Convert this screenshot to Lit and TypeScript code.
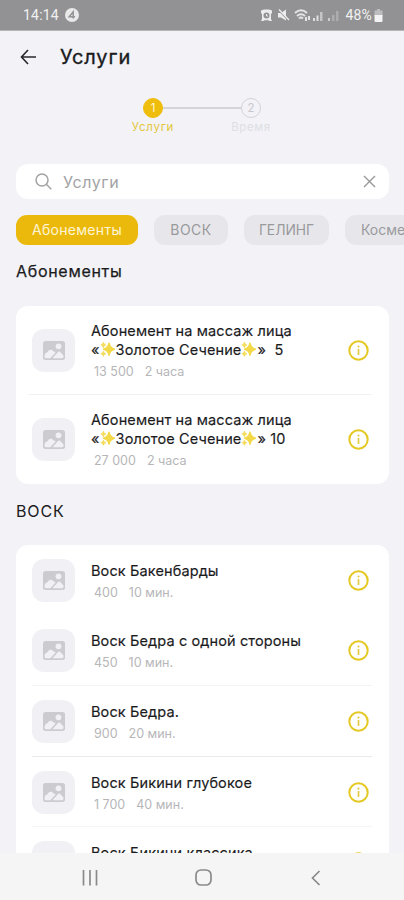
import { LitElement, html, css, nothing } from "lit";
import { customElement, property } from "lit/decorators.js";

interface Service {
  title: string;
  sparkle?: string;
  price: string;
  time: string;
  line?: string;
}

const passes: Service[] = [
  { title: "Абонемент на массаж лица", sparkle: "» \u00a05", price: "13 500", time: "2 часа", line: "#f1f1f3" },
  { title: "Абонемент на массаж лица", sparkle: "» 10", price: "27 000", time: "2 часа" },
];

const wax: Service[] = [
  { title: "Воск Бакенбарды", price: "400", time: "10 мин.", line: "#ffffff" },
  { title: "Воск Бедра с одной стороны", price: "450", time: "10 мин.", line: "#f3f3f5" },
  { title: "Воск Бедра.", price: "900", time: "20 мин.", line: "#e9e9ec" },
  { title: "Воск Бикини глубокое", price: "1 700", time: "40 мин.", line: "#f5f5f7" },
  { title: "Воск Бикини классика", price: "1 200", time: "30 мин." },
];

@customElement("service-row")
export class ServiceRow extends LitElement {
  @property({ attribute: false }) item!: Service;

  static styles = css`
    :host { display: block; }
    .row { position: relative; box-sizing: border-box; height: 70.6px; padding: 0 20px 0 16px; display: flex; align-items: center; }
    .tall { height: 89px; }
    .thumb { flex: none; width: 43px; height: 43px; border-radius: 12px; background: #f1f1f5; display: grid; place-items: center; }
    .body { flex: 1; padding: 3px 0 0 16px; white-space: nowrap; }
    .tall .body { padding-top: 1px; }
    .title { font-size: 14.5px; line-height: 19px; letter-spacing: 0.12px; color: #1b1b1d; -webkit-text-stroke: 0.15px #1b1b1d; display: flex; align-items: center; }
    .spark { width: 15px; height: 16px; flex: none; margin: 0 1px 0 0; }
    .meta { display: flex; gap: 11px; padding-left: 3px; margin-top: 2px; font-size: 12.5px; line-height: 21px; color: #b6b6b8; }
    .info { flex: none; width: 21px; height: 21px; }
    .line { position: absolute; left: 16px; right: 17px; bottom: 0; height: 1px; }
    .tall .line { left: 12px; }
    svg { display: block; }
  `;

  private spark() {
    return html`<svg class="spark" viewBox="0 0 15 16">
      <path fill="#f3d94a" d="M9 2.2Q9.8 7.2 14.6 8.2Q9.8 9.2 9 14.2Q8.2 9.2 3.5 8.2Q8.2 7.2 9 2.2Z" stroke="#f3d94a" stroke-width="1.5" stroke-linejoin="round"/>
      <path fill="#f3dc5a" d="M3.4 1Q3.7 3.5 6 4Q3.7 4.5 3.4 7Q3 4.5 .8 4Q3 3.5 3.4 1ZM3.4 10Q3.7 12.2 6 12.7Q3.7 13.2 3.4 15.4Q3 13.2 .8 12.7Q3 12.2 3.4 10Z" stroke="#f3dc5a" stroke-width=".6"/>
    </svg>`;
  }

  render() {
    const s = this.item;
    return html`<div class="row ${s.sparkle ? "tall" : ""}">
      <div class="thumb">
        <svg width="22" height="19" viewBox="0 0 22 19">
          <rect width="22" height="19" rx="2.5" fill="#cbcbd0"/>
          <circle cx="15.5" cy="5.3" r="2.9" fill="#f1f1f5"/>
          <path fill="#f1f1f5" d="M1.5 15.8C1.5 12.5 3.3 11.5 4.6 11.3C5.2 8.3 9 7.8 10.5 10.4Q11.9 10.3 12.6 11.6L7.3 17.2H2.8Q1.5 17.2 1.5 15.8ZM9.4 17.2L15.3 10.8Q16.2 10 17.1 10.8L20.5 14.5V15.8Q20.5 17.2 19.2 17.2Z"/>
        </svg>
      </div>
      <div class="body">
        <div class="title">${s.title}</div>
        ${s.sparkle
          ? html`<div class="title"><span>«</span>${this.spark()}<span>Золотое Сечение</span>${this.spark()}<span>${s.sparkle}</span></div>`
          : nothing}
        <div class="meta"><span>${s.price}</span><span>${s.time}</span></div>
      </div>
      <svg class="info" viewBox="0 0 21 21">
        <circle cx="10.5" cy="10.5" r="9.2" fill="none" stroke="#e4c824" stroke-width="2"/>
        <circle cx="10.5" cy="6.6" r="1.05" fill="#e3ca45"/>
        <path d="M10.5 9V15" stroke="#e3ca45" stroke-width="1.7"/>
      </svg>
      ${s.line ? html`<div class="line" style="background:${s.line}"></div>` : nothing}
    </div>`;
  }
}

@customElement("app-root")
export class AppRoot extends LitElement {
  static styles = css`
    :host { display: flex; flex-direction: column; width: 404px; height: 900px; overflow: hidden; background: #f2f2f7; font-family: Inter, "Noto Sans", sans-serif; color: #1b1b1d; }
    svg { display: block; flex: none; }
    .status { flex: none; height: 31px; padding: 0 21px 0 23px; display: flex; align-items: center; background: #929294; color: #f1f1f1; font: 14px Roboto, sans-serif; border-bottom: 1px solid #b5b5b8; box-sizing: border-box; }
    .clock { letter-spacing: 0.2px; width: 42px; }
    .grow { flex: 1; }
    .status .pct { margin: 0 2px 0 5px; letter-spacing: 0.2px; }
    .head { flex: none; height: 53px; box-sizing: border-box; display: flex; align-items: center; padding: 0 0 1px 20px; gap: 23px; }
    .head h1 { margin: 0; font-size: 20px; font-weight: 400; letter-spacing: 0.9px; -webkit-text-stroke: 0.35px #1b1b1d; }
    .steps { flex: none; height: 80px; padding-top: 14px; box-sizing: border-box; display: flex; justify-content: center; }
    .step { width: 42px; display: flex; flex-direction: column; align-items: center; font-size: 11.5px; color: #c9c9cd; white-space: nowrap; }
    .dot { width: 20px; height: 20px; box-sizing: border-box; border: 1.5px solid #d3d3d7; border-radius: 50%; display: grid; place-items: center; font-size: 11.5px; margin-bottom: 2px; }
    .step span { line-height: 14px; letter-spacing: 0.6px; color: #dfdfe3; }
    .on .dot { background: #efbd0b; border-color: #efbd0b; color: #fff6d8; }
    .step.on span { letter-spacing: 0.75px; color: #e5c73c; }
    .rail { width: 78px; height: 2px; background: #d5d5d9; margin: 9px -11px 0; }
    .search { flex: none; height: 35px; margin: 0 15px 0 16px; box-sizing: border-box; border-radius: 12px; background: #fff; display: flex; align-items: center; padding: 0 13px 0 19px; color: #a3a3a6; font-size: 16px; }
    .query { flex: 1; padding-left: 11px; letter-spacing: 0.6px; }
    .chips { flex: none; display: flex; gap: 16px; padding: 16px 0 0 16px; overflow: hidden; }
    .chip { flex: none; box-sizing: border-box; height: 30px; line-height: 30px; border-radius: 11px; background: #e7e7eb; color: #99999c; font-size: 14px; text-align: center; white-space: nowrap; }
    .chip.on { width: 122px; background: #ebb90b; color: #fff5d6; letter-spacing: 0.3px; }
    .c2 { width: 74px; letter-spacing: 0.5px; }
    .c3 { width: 85px; font-size: 13.8px; }
    .c4 { padding: 0 16px; }
    h2 { flex: none; margin: 0 0 0 16px; font-size: 16px; font-weight: 400; line-height: 22px; }
    .first { padding: 15px 0 24px; letter-spacing: 0.7px; -webkit-text-stroke: 0.25px #1b1b1d; }
    .second { padding: 16px 0 23px; letter-spacing: 0.9px; }
    .card { flex: none; margin: 0 15px 0 16px; border-radius: 12px; background: #fff; }
    .content { flex: 1; min-height: 0; overflow: hidden; display: flex; flex-direction: column; }
    .nav { flex: none; height: 47px; background: #f5f5f5; display: flex; align-items: center; padding: 2px 0 0 82px; box-sizing: border-box; }
    .home { margin: 0 99px 0 97px; }
  `;

  render() {
    return html`
      <div class="status">
        <span class="clock">14:14</span>
        <svg width="14" height="14" viewBox="0 0 14 14"><circle cx="7" cy="7" r="7" fill="#e9e9e9"/><path d="M8.2 10.5V3.8L4.2 8.7H10" fill="none" stroke="#929294" stroke-width="1.5"/></svg>
        <div class="grow"></div>
        <svg width="79" height="15" viewBox="0 0 79 15">
          <path fill="#ececec" d="M0 2.5L3 1.5H8L11 2.5V5L10 6V11L11 13H8.5L7.5 12.2H3.5L2.5 13H0L1 11V6L0 5Z"/><circle cx="5.5" cy="7.5" r="3" fill="#929294"/><path d="M5.5 6V8H7" stroke="#ececec" fill="none"/>
          <path fill="#ececec" d="M17 5H20L25 1.5V12.5L20 9.5H17Z"/><path d="M17 1.5L27.5 12.5" stroke="#929294" stroke-width="1.2"/><path d="M18 1.5L28 12" stroke="#ececec" stroke-width="1.3"/>
          <g fill="none" stroke="#e4e4e4" stroke-width="1.9"><path d="M34 5Q40 -.5 46 5M36 8Q40 4.5 44 8M38 10.5Q40 8.5 42 10.5"/></g><path fill="#e4e4e4" d="M44 9H46V13H44ZM47 8H49V12H47Z"/>
          <path fill="#dddddd" d="M52 10H54V13H52ZM55.5 7.5H57.5V13H55.5Z"/><path fill="#c5c5c6" d="M59 4H61.5V13H59Z"/>
          <path fill="#cdcdcd" d="M67 10H69V13H67Z"/><path fill="#acacae" d="M71 7H73.5V13H71ZM75 3H77.5V13H75Z"/>
        </svg>
        <span class="pct">48%</span>
        <svg width="9" height="13" viewBox="0 0 9 13"><path fill="#bdbdbf" d="M3 0H6V1.5H8.5V7H.5V1.5H3Z"/><path fill="#f3f3f3" d="M.5 6H8.5V12Q8.5 13 7.5 13H1.5Q.5 13 .5 12Z"/></svg>
      </div>
      <div class="head">
        <svg width="17" height="16" viewBox="0 0 17 16"><path d="M8 1L1.5 8L8 15M1.5 8H16" fill="none" stroke="#28282a" stroke-width="1.6"/></svg>
        <h1>Услуги</h1>
      </div>
      <div class="steps">
        <div class="step on"><div class="dot">1</div><span>Услуги</span></div>
        <div class="rail"></div>
        <div class="step"><div class="dot">2</div><span>Время</span></div>
      </div>
      <div class="search">
        <svg width="17" height="17" viewBox="0 0 17 17"><g fill="none" stroke="#a3a3a6" stroke-width="1.5"><circle cx="7" cy="7" r="6"/><path d="M11.3 11.3L16.3 16.3"/></g></svg>
        <span class="query">Услуги</span>
        <svg width="13" height="13" viewBox="0 0 13 13"><path d="M1 1L12 12M12 1L1 12" stroke="#98989b" stroke-width="1.4"/></svg>
      </div>
      <div class="chips">
        <div class="chip on">Абонементы</div>
        <div class="chip c2">ВОСК</div>
        <div class="chip c3">ГЕЛИНГ</div>
        <div class="chip c4">Косметика</div>
      </div>
      <div class="content">
        <h2 class="first">Абонементы</h2>
        <div class="card">${passes.map((p) => html`<service-row .item=${p}></service-row>`)}</div>
        <h2 class="second">ВОСК</h2>
        <div class="card">${wax.map((p) => html`<service-row .item=${p}></service-row>`)}</div>
      </div>
      <div class="nav">
        <svg width="16" height="16" viewBox="0 0 16 16"><path d="M1.5 0V15.5M8 0V15.5M14.5 0V15.5" stroke="#8a8a8a" stroke-width="1.7"/></svg>
        <svg class="home" width="17" height="17" viewBox="0 0 17 17"><rect x="1" y="1" width="15" height="15" rx="5" fill="none" stroke="#8a8a8a" stroke-width="1.7"/></svg>
        <svg width="10" height="16" viewBox="0 0 10 16"><path d="M8.5 1L1.5 8L8.5 15" fill="none" stroke="#8a8a8a" stroke-width="1.7"/></svg>
      </div>
    `;
  }
}
